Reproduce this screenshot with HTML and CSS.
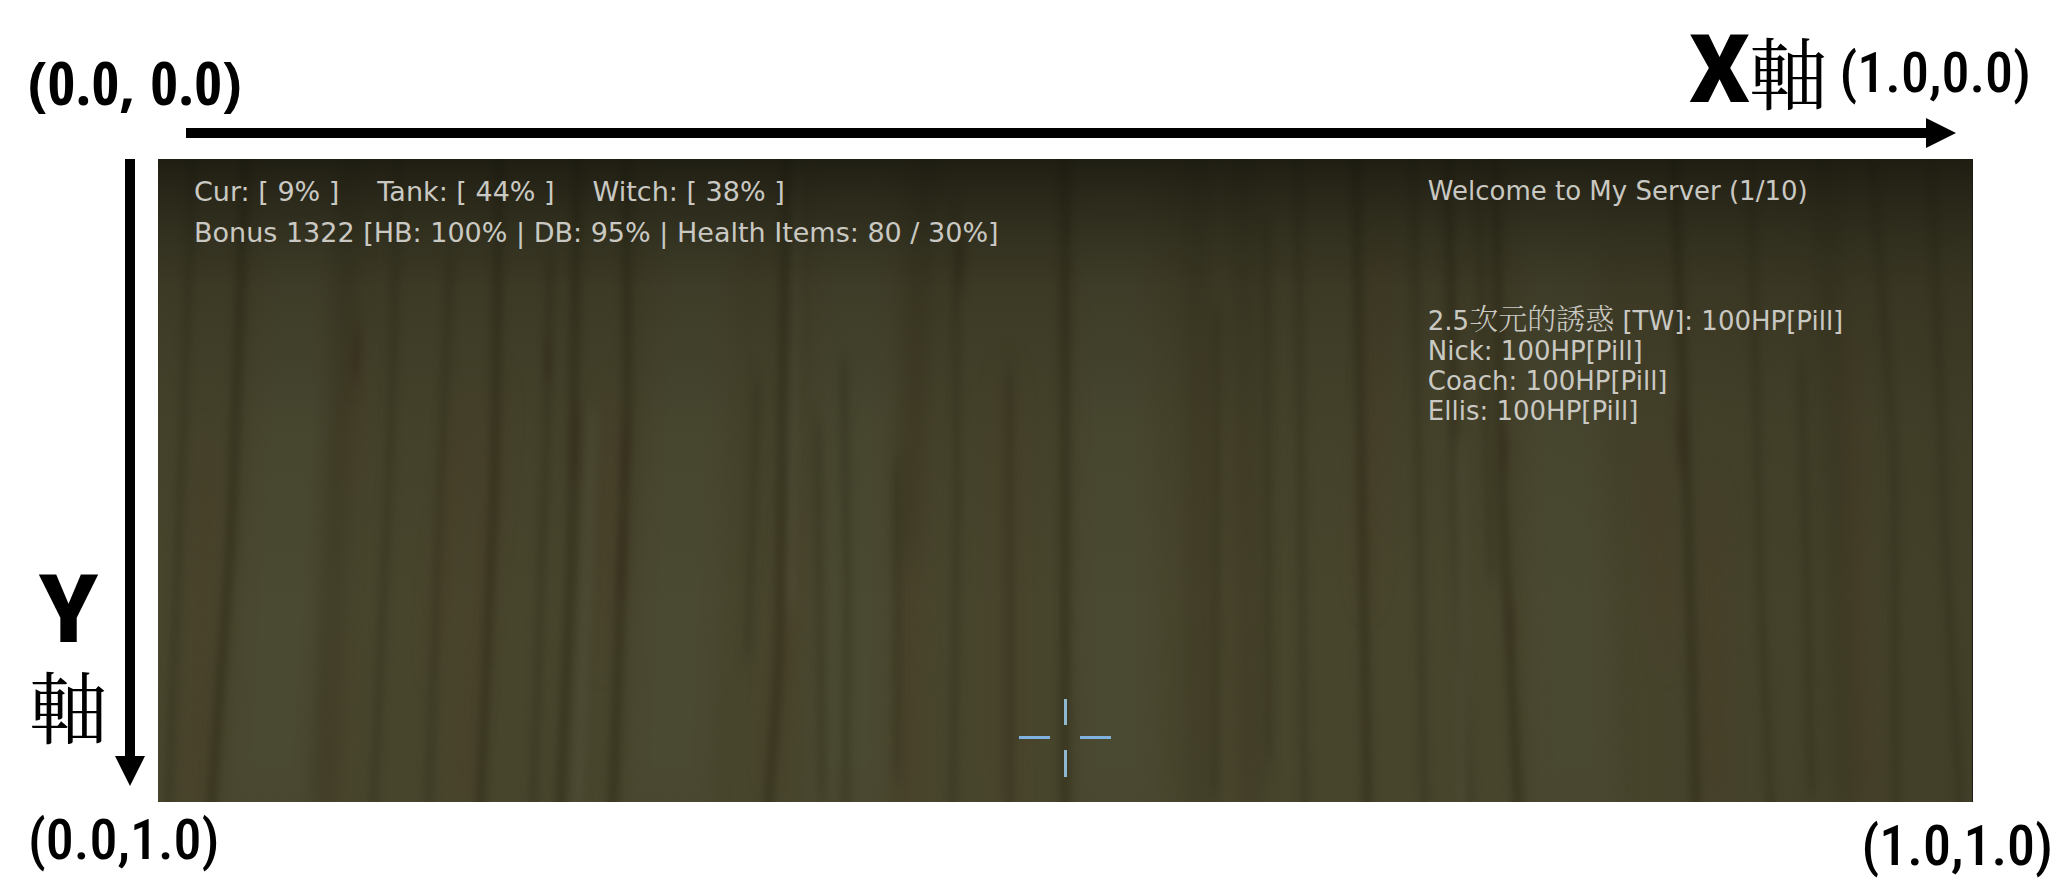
FILE: index.html
```html
<!DOCTYPE html>
<html lang="zh-Hant">
<head>
<meta charset="utf-8">
<title>HUD coordinates</title>
<link rel="stylesheet" href="styles.css">
</head>
<body>
<main class="diagram">
  <header class="top">
    <span class="corner corner-origin">(0.0, 0.0)</span>
    <div class="x-axis">
      <span class="axis-letter">X</span><span class="axis-word">軸</span>
      <span class="corner corner-x">(1.0,0.0)</span>
    </div>
  </header>

  <div class="arrow arrow-x"></div>

  <div class="middle">
    <div class="y-axis">
      <span class="axis-letter">Y</span>
      <span class="axis-word">軸</span>
    </div>
    <div class="arrow arrow-y"></div>

    <section class="screen">
      <svg class="wall" viewBox="0 0 1816 643" preserveAspectRatio="none" aria-hidden="true">
        <defs>
          <linearGradient id="shade" x1="0" y1="0" x2="0" y2="1">
            <stop offset="0" stop-color="#14130b" stop-opacity=".78"/>
            <stop offset=".08" stop-color="#17160d" stop-opacity=".55"/>
            <stop offset=".2" stop-color="#1a190f" stop-opacity=".26"/>
            <stop offset=".42" stop-color="#1a190f" stop-opacity=".08"/>
            <stop offset=".7" stop-color="#1a190f" stop-opacity="0"/>
          </linearGradient>
          <linearGradient id="side" x1="0" y1="0" x2="1" y2="0">
            <stop offset=".75" stop-color="#1a170c" stop-opacity="0"/>
            <stop offset="1" stop-color="#1a170c" stop-opacity=".12"/>
          </linearGradient>
          <filter id="soft" x="-5%" y="-5%" width="110%" height="110%" color-interpolation-filters="sRGB"><feGaussianBlur stdDeviation="4 12"/></filter>
          <filter id="wide" x="-5%" y="-5%" width="110%" height="110%" color-interpolation-filters="sRGB"><feGaussianBlur stdDeviation="9 24"/></filter>
        </defs>
        <rect width="1816" height="643" fill="#48452d"/>
        <g filter="url(#wide)" fill="none">
          <g stroke="#4b4a32" stroke-width="80">
            <path d="M150-20L110 660M545-20L510 660M700-20L690 660" opacity=".8"/>
            <path d="M955-20L960 660M1400-20L1420 660" opacity=".8"/>
          </g>
          <g stroke="#4d3f29" stroke-width="20" opacity=".45">
            <path d="M195 180L188 330M180 480L170 660M305 250L280 500M340 240L300 660M50 300L35 660M455 250L445 480M640 360L615 600M760 120L750 660M850 230L850 640"/>
            <path d="M1085 250L1090 640M1045 170L1045 600M1225 80L1210 420M1495 300L1510 480M1555 350L1560 640M1690 180L1710 640"/>
          </g>
          <g stroke="#3a3822" stroke-width="24" opacity=".5">
            <path d="M192-20L165 660M1040-20L1042 660M1668-20L1690 660M1085-20L1095 660M770-20L750 400"/>
          </g>
        </g>
        <g filter="url(#soft)" fill="none" stroke="#302d19">
          <path stroke-width="9" opacity=".65" d="M88-10L73 380 52 660M342-10L337 320 322 660M420-10L414 400 402 660M469-10L470 250 455 660M629-10L622 500 610 660M908-10V660M1199-10L1211 660M1291-10L1300 380 1312 660M1338-10L1345 330 1362 660M1517-10L1530 300 1540 660"/>
          <path stroke-width="7" opacity=".5" d="M35-10L22 350 10 660M241-10L232 300 215 660M293 90L282 350 270 660M393 90L389 270 375 660M686 200L690 420 688 660M798 40L800 350 795 660M852 210V660M1141-10L1148 660M1256-10L1268 660M1594 0L1605 450 1615 660M1715-10L1738 300 1740 660M1775-10L1790 400 1805 660M600 220L590 500M740 300V620M660 260L665 640M1060 150L1058 640M1110 60L1112 600M1645 200L1655 640M1320 0L1335 420"/>
          <path stroke-width="7" opacity=".6" stroke="#35281a" d="M469 265L466 330M467 360L462 440M420 250L418 320M1348 275L1350 305M1354 450L1355 480M1522 250L1526 310M391 180L390 220M805 80L803 130M200 170L197 220"/>
          <path stroke-width="9" opacity=".7" stroke="#504f37" d="M436 250L420 660M1302 280L1308 660M640-10L634 450"/>
        </g>
        <rect width="1816" height="643" fill="url(#shade)"/>
        <rect width="1816" height="643" fill="url(#side)"/>
      </svg>

      <div class="hud hud-left">
        <p class="line stats"><span>Cur: [ 9% ]</span><span>Tank: [ 44% ]</span><span>Witch: [ 38% ]</span></p>
        <p class="line">Bonus 1322 [HB: 100% | DB: 95% | Health Items: 80 / 30%]</p>
      </div>
      <div class="hud hud-right">
        <p class="line">Welcome to My Server (1/10)</p>
        <ul class="players">
          <li>2.5<span class="cjk">次元的誘惑</span> [TW]: 100HP[Pill]</li>
          <li>Nick: 100HP[Pill]</li>
          <li>Coach: 100HP[Pill]</li>
          <li>Ellis: 100HP[Pill]</li>
        </ul>
      </div>

      <svg class="crosshair" viewBox="0 0 92 78" aria-hidden="true">
        <g fill="#7fb2e0">
          <path d="M0 37h31v3H0zM61 37h31v3H61z"/>
          <path fill="#8fb8d0" d="M45 0h3v26h-3zM45 51h3v27h-3z"/>
        </g>
      </svg>
    </section>
  </div>

  <footer class="bottom">
    <span class="corner corner-y">(0.0,1.0)</span>
    <span class="corner corner-end">(1.0,1.0)</span>
  </footer>
</main>
</body>
</html>
```
FILE: styles.css
```css
* {
  box-sizing: border-box;
}

body {
  margin: 0;
  background: #fff;
  color: #000;
  font-family: "DejaVu Sans", "Noto Sans CJK TC", sans-serif;
}

p,
ul {
  margin: 0;
  padding: 0;
  list-style: none;
}

.diagram {
  display: flex;
  flex-direction: column;
  min-height: 100vh;
}

/* corner coordinates and axis names */
.corner {
  font-family: "Roboto Condensed", Roboto, sans-serif;
  font-size: 56px;
  font-weight: 500;
  line-height: 64px;
  white-space: nowrap;
}

.corner-origin {
  font-family: "Open Sans Condensed", "Open Sans", sans-serif;
  font-size: 60px;
  font-weight: 700;
}

.axis-letter {
  font-family: Roboto, "Noto Sans", sans-serif;
  font-size: 94px;
  font-weight: 900;
  line-height: 80px;
}

.axis-word {
  font-family: "Noto Serif CJK TC", "Noto Sans CJK TC", serif;
  font-size: 78px;
  font-weight: 400;
  line-height: 80px;
}

.top {
  display: flex;
  justify-content: space-between;
  align-items: flex-end;
  height: 118px;
  padding: 0 28px 4px;
}

.x-axis {
  display: flex;
  align-items: center;
  padding-bottom: 4px;
}

.corner-x {
  padding-top: 6px;
  margin-left: 12px;
}

/* arrows */
.arrow {
  flex: none;
  background: #000;
}

.arrow-x {
  height: 30px;
  margin: 0 103px 0 186px;
  clip-path: polygon(0 10px, calc(100% - 30px) 10px, calc(100% - 30px) 0, 100% 50%, calc(100% - 30px) 100%, calc(100% - 30px) 20px, 0 20px);
}

.arrow-y {
  width: 30px;
  margin: 0 13px 16px 0;
  clip-path: polygon(10px 0, 20px 0, 20px calc(100% - 30px), 100% calc(100% - 30px), 50% 100%, 0 calc(100% - 30px), 10px calc(100% - 30px));
}

.middle {
  display: flex;
  flex: 1;
  padding: 11px 86px 0 0;
}

.y-axis {
  display: flex;
  flex-direction: column;
  justify-content: flex-end;
  align-items: center;
  gap: 14px;
  width: 115px;
  padding: 0 0 58px 22px;
}

/* game screen */
.screen {
  position: relative;
  display: grid;
  grid-template-columns: 70% 30%;
  flex: 1;
  min-height: 400px;
  padding-top: 12px;
  border-right: 1px solid #1d1c14;
  background: #48462e;
  color: #c9c8c2;
}

.wall {
  position: absolute;
  inset: 0;
  width: 100%;
  height: 100%;
}

.hud {
  position: relative;
  white-space: nowrap;
}

.hud-left {
  padding-left: 36px;
  font-size: 27px;
}

.hud-right {
  font-size: 26px;
}

.line {
  line-height: 41px;
}

.stats {
  display: flex;
  gap: 38px;
}

.players {
  padding-top: 91px;
  line-height: 30px;
}

.cjk {
  font-family: "Noto Serif CJK TC", "Noto Sans CJK TC", serif;
  font-size: 29px;
  font-weight: 300;
  line-height: 1;
}

.crosshair {
  position: absolute;
  left: 50%;
  top: 90%;
  width: 92px;
  height: 78px;
  transform: translate(-50%, -50%);
}

.bottom {
  display: flex;
  justify-content: space-between;
  height: 91px;
  padding: 6px 6px 0 28px;
}

.corner-end {
  padding-top: 6px;
}
```
